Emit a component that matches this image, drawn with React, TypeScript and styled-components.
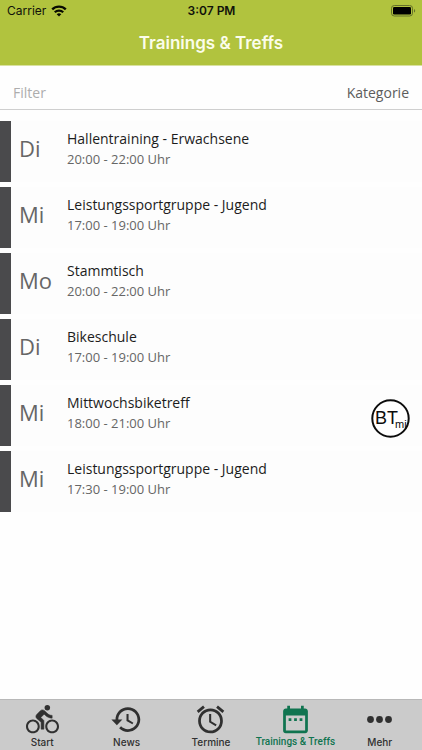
import React from 'react';
import styled, { createGlobalStyle } from 'styled-components';
import { MdAccessAlarm, MdDateRange } from 'react-icons/md';

const GlobalStyle = createGlobalStyle`
  * { box-sizing: border-box; }
  html, body, #root { height: 100%; margin: 0; }
  body { background: #fefefe; }
  button, input { font: inherit; margin: 0; padding: 0; border: 0; background: none; }
`;

const Screen = styled.div`
  display: flex;
  flex-direction: column;
  min-height: 100%;
  font-family: 'Open Sans', sans-serif;
  color: #1c1c1c;
`;

const Header = styled.header`
  background: #b1c33e;
  font-family: Inter, sans-serif;
  height: 66px;
  border-bottom: 1px solid #d9e1a0;
`;

const StatusBar = styled.div`
  display: grid;
  grid-template-columns: 1fr auto 1fr;
  align-items: center;
  height: 22px;
  padding: 0 6px 0 7px;
  font-size: 12px;
  line-height: 22px;
  color: #10120a;
`;

const Carrier = styled.div`
  display: flex;
  align-items: center;
  gap: 5px;
`;

const Clock = styled.time`
  font-weight: 600;
`;

const Battery = styled.svg`
  justify-self: end;
`;

const Title = styled.h1`
  margin: 0;
  font-size: 17px;
  font-weight: 600;
  line-height: 42px;
  text-align: center;
  color: #fbfdea;
`;

const FilterBar = styled.div`
  display: flex;
  align-items: center;
  justify-content: space-between;
  height: 44px;
  padding: 10px 13px 0;
  border-bottom: 1px solid #cfcfcf;
  font-size: 14px;
  line-height: 20px;
`;

const FilterInput = styled.input`
  flex: 1;
  min-width: 0;
  outline: none;
  &::placeholder { color: #adadad; opacity: 1; }
`;

const CategoryButton = styled.button`
  color: #5c5c5c;
`;

const List = styled.ul`
  flex: 1;
  display: flex;
  flex-direction: column;
  gap: 5px;
  margin: 0;
  padding: 11px 0;
  list-style: none;
`;

const Row = styled.li`
  display: flex;
  align-items: center;
  height: 61px;
  padding: 0 12px 0 8px;
  border-left: 11px solid #4a4a4c;
  background: #fdfdfd;
`;

const Day = styled.span`
  width: 48px;
  padding-bottom: 8px;
  font-size: 22px;
  line-height: 30px;
  color: #666;
`;

const Details = styled.div`
  flex: 1;
  padding-bottom: 6px;
`;

const Name = styled.div`
  font-size: 14px;
  line-height: 21px;
`;

const Time = styled.div`
  font-size: 13px;
  line-height: 20px;
  color: #666;
`;

const Badge = styled.svg`
  margin-top: 6px;
`;

const TabBar = styled.nav`
  display: grid;
  grid-template-columns: repeat(5, 1fr);
  height: 51px;
  border-top: 1px solid #b8b8b8;
  background: #cbcbcb;
`;

const Tab = styled.button<{ $active?: boolean }>`
  display: flex;
  flex-direction: column;
  align-items: center;
  padding-top: 3px;
  font-family: ${({ $active }) => ($active ? 'Roboto' : 'Inter')}, sans-serif;
  font-size: 10px;
  font-weight: 500;
  line-height: 12px;
  white-space: nowrap;
  color: ${({ $active }) => ($active ? '#107450' : '#303030')};

  svg { flex: none; }
`;

const BikeIcon = () => (
  <svg width="33" height="33" viewBox="0 0 24 24" fill="currentColor" aria-hidden="true">
    <path d="M5 12c-2.8 0-5 2.2-5 5s2.2 5 5 5 5-2.2 5-5-2.2-5-5-5zm0 8.5c-1.9 0-3.5-1.6-3.5-3.5s1.6-3.5 3.5-3.5 3.5 1.6 3.5 3.5-1.6 3.5-3.5 3.5z" />
    <path d="M19 12c-2.8 0-5 2.2-5 5s2.2 5 5 5 5-2.2 5-5-2.2-5-5-5zm0 8.5c-1.9 0-3.5-1.6-3.5-3.5s1.6-3.5 3.5-3.5 3.5 1.6 3.5 3.5-1.6 3.5-3.5 3.5z" />
    <circle cx="15.5" cy="3.5" r="2" />
    <path
      stroke="currentColor"
      strokeWidth="0.4"
      strokeLinejoin="round"
      d="M10.8 10.5l2.4-2.4.8.8c1.3 1.3 3 2.1 5 2.1V9c-1.5 0-2.7-.6-3.6-1.5l-1.9-1.9c-.5-.4-1-.6-1.6-.6s-1.1.2-1.4.6L7.8 8.4c-.4.4-.6.9-.6 1.4 0 .6.2 1.1.6 1.4L11 14v5h2v-6.2l-2.2-2.3z"
    />
  </svg>
);

const HistoryIcon = () => (
  <svg width="33" height="33" viewBox="0 0 24 24" fill="currentColor" aria-hidden="true">
    <path d="M13 3c-4.97 0-9 4.03-9 9H1l4 4.2L9 12H6c0-3.87 3.13-7 7-7s7 3.13 7 7-3.13 7-7 7c-1.93 0-3.68-.79-4.94-2.06l-1.42 1.42C8.27 19.99 10.51 21 13 21c4.97 0 9-4.03 9-9s-4.03-9-9-9zm-1 5v5l4.28 2.54.72-1.21-3.5-2.08V8H12z" />
  </svg>
);

const MoreDots = () => (
  <svg width="33" height="33" viewBox="0 0 33 33" fill="currentColor" aria-hidden="true">
    <circle cx="7.5" cy="16.5" r="3.4" />
    <circle cx="16.5" cy="16.5" r="3.4" />
    <circle cx="25.5" cy="16.5" r="3.4" />
  </svg>
);

const trainings = [
  { day: 'Di', name: 'Hallentraining - Erwachsene', time: '20:00 - 22:00 Uhr' },
  { day: 'Mi', name: 'Leistungssportgruppe - Jugend', time: '17:00 - 19:00 Uhr' },
  { day: 'Mo', name: 'Stammtisch', time: '20:00 - 22:00 Uhr' },
  { day: 'Di', name: 'Bikeschule', time: '17:00 - 19:00 Uhr' },
  { day: 'Mi', name: 'Mittwochsbiketreff', time: '18:00 - 21:00 Uhr', badge: true },
  { day: 'Mi', name: 'Leistungssportgruppe - Jugend', time: '17:30 - 19:00 Uhr' },
];

const tabs = [
  { label: 'Start', icon: <BikeIcon /> },
  { label: 'News', icon: <HistoryIcon /> },
  { label: 'Termine', icon: <MdAccessAlarm size={33} /> },
  { label: 'Trainings & Treffs', icon: <MdDateRange size={33} />, active: true },
  { label: 'Mehr', icon: <MoreDots /> },
];

export default function App() {
  return (
    <Screen>
      <GlobalStyle />
      <Header>
        <StatusBar>
          <Carrier>
            Carrier
            <svg width="16" height="12" viewBox="0 0 16 12" aria-hidden="true">
              <g fill="none" stroke="#080a00" strokeWidth="2.3">
                <path d="M1.2 4.4a9.6 9.6 0 0 1 13.6 0" />
                <path d="M3.8 7.3a5.9 5.9 0 0 1 8.4 0" />
              </g>
              <path d="M8 11.6 5.7 9.3a3.3 3.3 0 0 1 4.6 0z" fill="#080a00" />
            </svg>
          </Carrier>
          <Clock>3:07 PM</Clock>
          <Battery width="25" height="12" viewBox="0 0 25 12" aria-hidden="true">
            <rect x="0.5" y="0.5" width="21" height="10.5" rx="2.8" fill="none" stroke="#65702a" />
            <rect x="2" y="2" width="18" height="7.5" rx="1.3" fill="#000" />
            <path d="M23 4v3.6c1.6-.5 1.6-3.1 0-3.6z" fill="#65702a" />
          </Battery>
        </StatusBar>
        <Title>Trainings &amp; Treffs</Title>
      </Header>
      <FilterBar>
        <FilterInput type="text" placeholder="Filter" aria-label="Filter" />
        <CategoryButton type="button">Kategorie</CategoryButton>
      </FilterBar>
      <List>
        {trainings.map((t, i) => (
          <Row key={i}>
            <Day>{t.day}</Day>
            <Details>
              <Name>{t.name}</Name>
              <Time>{t.time}</Time>
            </Details>
            {t.badge && (
              <Badge width="39" height="39" viewBox="0 0 39 39" role="img" aria-label="BTmi">
                <circle cx="19.5" cy="19.5" r="18.2" fill="#fff" stroke="#0c0c0c" strokeWidth="2" />
                <text x="4" y="25" fontFamily="Liberation Sans, sans-serif" fontSize="18" fill="#0c0c0c">
                  BT<tspan dx="-3" dy="4" fontSize="11">mi</tspan>
                </text>
              </Badge>
            )}
          </Row>
        ))}
      </List>
      <TabBar>
        {tabs.map((t) => (
          <Tab key={t.label} type="button" $active={t.active} aria-current={t.active ? 'page' : undefined}>
            {t.icon}
            {t.label}
          </Tab>
        ))}
      </TabBar>
    </Screen>
  );
}
